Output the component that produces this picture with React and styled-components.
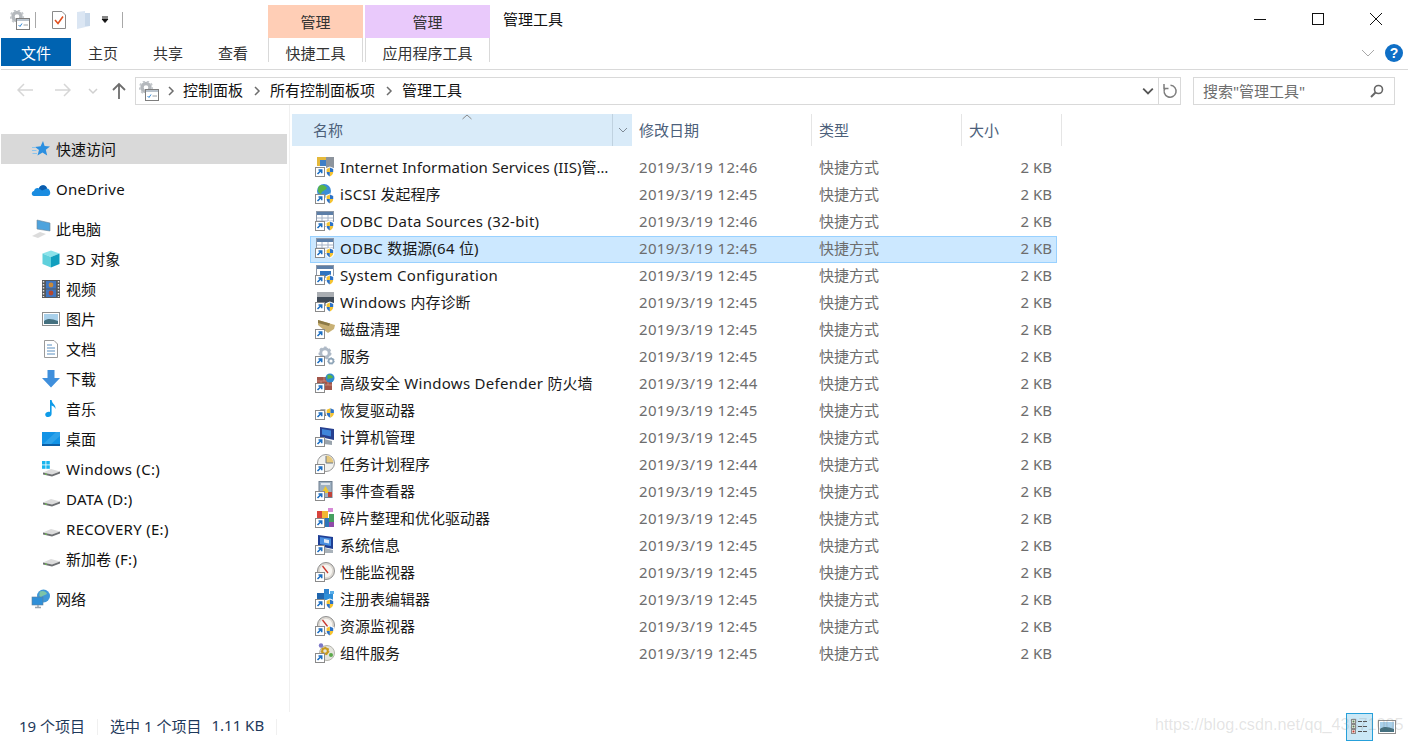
import styled, { createGlobalStyle } from 'styled-components'

const GlobalStyle = createGlobalStyle`
    html, body {
        margin: 0;
        padding: 0;
        background: #fff;
    }
    body {
        font-family: "Noto Sans", "Noto Sans CJK SC", sans-serif;
        font-size: 15px;
        color: #1a1a1a;
    }
`

const Window = styled.div`
    position: relative;
    display: flex;
    flex-direction: column;
    width: 1408px;
    height: 742px;
    overflow: hidden;
    background: #fff;
`

const TitleBar = styled.div`
    display: flex;
    align-items: flex-end;
    height: 38px;
    flex: none;
`

const Qat = styled.div`
    display: flex;
    align-items: center;
    width: 268px;
    height: 38px;
    padding: 1px 0 0 10px;
    box-sizing: border-box;
`

const QatSep = styled.span`
    width: 1px;
    height: 16px;
    background: #a8a8a8;
    margin: 0 ${(p) => p.$after}px 0 ${(p) => p.$before}px;
`

const QatGap = styled.span`
    width: 10px;
`

const ContextHead = styled.div`
    display: flex;
    align-items: center;
    justify-content: center;
    width: ${(p) => p.$w}px;
    height: 33px;
    margin-right: 2px;
    background: ${(p) => p.$bg};
    color: #333;
`

const TitleText = styled.div`
    align-self: center;
    margin: 0 0 0 11px;
    padding-bottom: 1px;
    color: #111;
`

const WindowControls = styled.div`
    display: flex;
    align-self: flex-start;
    margin-left: auto;
    margin-right: 3px;
`

const ControlButton = styled.div`
    display: flex;
    align-items: center;
    justify-content: center;
    width: 58px;
    height: 38px;
`

const TabRow = styled.div`
    display: flex;
    height: 31px;
    flex: none;
    margin-left: 1px;
    border-bottom: 1px solid #d9d9d9;
`

const FileTab = styled.div`
    display: flex;
    align-items: center;
    justify-content: center;
    width: 70px;
    height: 28px;
    background: #0063b1;
    color: #fff;
`

const Tab = styled.div`
    display: flex;
    align-items: center;
    justify-content: center;
    width: 65px;
    height: 28px;
    padding-right: 1px;
    box-sizing: border-box;
    color: #333;
`

const ContextTab = styled.div`
    display: flex;
    align-items: center;
    justify-content: center;
    width: ${(p) => p.$w}px;
    height: 24px;
    margin-left: ${(p) => p.$ml}px;
    padding-top: 4px;
    border: 1px solid #d9d9d9;
    border-width: 0 1px;
    box-sizing: border-box;
    color: #333;
`

const RibbonRight = styled.div`
    display: flex;
    align-items: center;
    margin-left: auto;
    margin-right: 5px;
    height: 30px;
    gap: 10px;
`

const AddressRow = styled.div`
    display: flex;
    align-items: flex-start;
    height: 35px;
    flex: none;
    padding-top: 7px;
    box-sizing: border-box;
`

const NavButton = styled.div`
    display: flex;
    align-items: center;
    justify-content: center;
    width: ${(p) => p.$w}px;
    height: 28px;
`

const AddressBox = styled.div`
    display: flex;
    align-items: center;
    width: 1046px;
    height: 28px;
    margin-left: 7px;
    padding-left: 3px;
    border: 1px solid #d9d9d9;
    box-sizing: border-box;
`

const CrumbSep = styled.span`
    display: flex;
    align-items: center;
    justify-content: center;
    width: ${(p) => p.$w}px;
`

const Crumb = styled.span`
    color: #111;
    line-height: 26px;
    padding-bottom: 2px;
`

const AddressEnd = styled.div`
    display: flex;
    align-items: center;
    height: 100%;
    margin-left: auto;
`

const AddressDrop = styled.div`
    display: flex;
    align-items: center;
    justify-content: center;
    width: 20px;
    height: 100%;
    border-right: 1px solid #d9d9d9;
`

const Refresh = styled.div`
    display: flex;
    align-items: center;
    justify-content: center;
    width: 21px;
`

const SearchBox = styled.div`
    display: flex;
    align-items: center;
    justify-content: space-between;
    width: 202px;
    height: 28px;
    margin-left: 12px;
    padding: 0 10px 0 9px;
    border: 1px solid #d9d9d9;
    box-sizing: border-box;
    color: #6d6d6d;
`

const SearchText = styled.span`
    padding-bottom: 2px;
    white-space: nowrap;
`

const Main = styled.div`
    display: flex;
    flex: 1;
    min-height: 0;
`

const Sidebar = styled.nav`
    width: 290px;
    flex: none;
    padding-top: 29px;
    box-sizing: border-box;
    border-right: 1px solid #f0f0f0;
`

const NavItem = styled.div`
    display: flex;
    align-items: center;
    height: 30px;
    width: 286px;
    margin-left: 1px;
    margin-bottom: ${(p) => (p.$gap ? 10 : 0)}px;
    padding-left: ${(p) => (p.$sub ? 40 : 30)}px;
    box-sizing: border-box;
    background: ${(p) => (p.$active ? '#d9d9d9' : 'transparent')};
    color: #111;
`

const NavIcon = styled.span`
    display: flex;
    align-items: center;
    justify-content: center;
    width: 20px;
    height: 20px;
    margin-right: 5px;
`

const NavLabel = styled.span`
    padding-bottom: ${(p) => (p.$latin ? 0 : 2)}px;
    white-space: nowrap;
`

const ListPane = styled.div`
    flex: 1;
    min-width: 0;
    padding-top: 9px;
`

const HeaderRow = styled.div`
    display: flex;
    height: 32px;
    margin-left: 2px;
`

const NameHeader = styled.div`
    display: flex;
    align-items: center;
    position: relative;
    width: 340px;
    background: #d9ebf9;
    color: #4c607a;
`

const NameLabel = styled.span`
    flex: 1;
    padding: 0 0 2px 21px;
`

const SortCaret = styled.span`
    position: absolute;
    left: 170px;
    top: 0;
    line-height: 0;
`

const NameDrop = styled.span`
    display: flex;
    align-items: center;
    justify-content: center;
    width: 19px;
    height: 100%;
    border-left: 1px solid #c0d2e0;
`

const HeaderCell = styled.div`
    display: flex;
    align-items: center;
    width: ${(p) => p.$w}px;
    padding: 0 0 2px ${(p) => p.$pl}px;
    box-sizing: border-box;
    border-right: 1px solid #e5e5e5;
    color: #4c607a;
`

const FileList = styled.div`
    margin: 9px 0 0 20px;
    width: 747px;
`

const FileRow = styled.div`
    display: grid;
    grid-template-columns: 25px 272px 198px 150px 1fr;
    align-items: center;
    height: 27px;
    padding: 0 4px;
    box-sizing: border-box;
    border: 1px solid ${(p) => (p.$selected ? '#99d1ff' : 'transparent')};
    background: ${(p) => (p.$selected ? '#cce8ff' : 'transparent')};
`

const FileIcon = styled.span`
    display: flex;
    width: 20px;
    height: 20px;
    margin-bottom: 3px;
`

const FileName = styled.span`
    color: #1a1a1a;
    white-space: nowrap;
    overflow: hidden;
    text-overflow: ellipsis;
    padding: 0 2px 4px 0;
`

const FileMeta = styled.span`
    color: #6d6d6d;
    white-space: nowrap;
    text-align: ${(p) => (p.$right ? 'right' : 'left')};
    padding: 0 0 4px ${(p) => p.$pl || 0}px;
    letter-spacing: ${(p) => (p.$date ? 0.34 : 0)}px;
`

const Latin = styled.span`
    letter-spacing: ${(p) => p.$track}px;
`

const StatusBar = styled.footer`
    display: flex;
    align-items: center;
    height: 30px;
    flex: none;
    padding: 0 0 0 19px;
    color: #1e395b;
`

const StatusText = styled.span`
    padding-bottom: 4px;
    margin-left: ${(p) => p.$ml || 0}px;
    white-space: nowrap;
`

const StatusSep = styled.span`
    width: 1px;
    height: 16px;
    background: #f0f0f0;
    margin: 0 ${(p) => p.$after}px 0 ${(p) => p.$before}px;
`

const ViewButtons = styled.div`
    display: flex;
    align-items: center;
    margin-left: auto;
    margin-right: 8px;
`

const ViewButton = styled.div`
    display: flex;
    align-items: center;
    justify-content: center;
    width: 27px;
    height: 28px;
    box-sizing: border-box;
    border: 1px solid ${(p) => (p.$on ? '#26a0da' : 'transparent')};
    background: ${(p) => (p.$on ? '#cbe8f6' : 'transparent')};
`

const Watermark = styled.div`
    position: absolute;
    left: 1155px;
    top: 715px;
    font-family: "Liberation Sans", sans-serif;
    font-size: 16.2px;
    color: rgba(120, 120, 120, 0.2);
    white-space: nowrap;
`

// ascii runs in Segoe sit wider than in Noto, the CJK glyphs don't
const Mixed = ({ text, track = 0.3 }) =>
    text.split(/([\x20-\x7e]+)/).map((part, i) =>
        /[\x21-\x7e]/.test(part) ? <Latin key={i} $track={track}>{part}</Latin> : part
    )

const Shortcut = () => (
    <g>
        <rect x="0.5" y="10.5" width="9" height="9" fill="#fff" stroke="#8a8a8a" />
        <path d="M2.5 17 L6 13.5 M3.5 13 H6.7 V16.2" fill="none" stroke="#1c6fc4" strokeWidth="1.6" />
    </g>
)

const Shield = ({ x = 10.5, y = 9.5, s = 1.1 }) => (
    <g transform={`translate(${x} ${y}) scale(${s})`}>
        <path d="M4 0 L8 1.5 V5 C8 7.5 6 9 4 10 C2 9 0 7.5 0 5 V1.5 Z" fill="#fff" />
        <path d="M4 1 L7 2.2 V5 H4 Z" fill="#2c72c7" />
        <path d="M4 1 L1 2.2 V5 H4 Z" fill="#f5c330" />
        <path d="M1 5 H4 V9 C2.5 8.2 1 7 1 5 Z" fill="#2c72c7" />
        <path d="M7 5 H4 V9 C5.5 8.2 7 7 7 5 Z" fill="#f5c330" />
    </g>
)

const Gear = ({ cx, cy, r, color = '#b9bec4' }) => (
    <g>
        <circle cx={cx} cy={cy} r={r} fill="none" stroke={color} strokeWidth={r * 0.7} />
        <circle cx={cx} cy={cy} r={r * 1.35} fill="none" stroke={color} strokeWidth={r * 0.4} strokeDasharray={`${r * 0.6} ${r * 0.6}`} />
    </g>
)

const Gauge = () => (
    <g>
        <circle cx="11" cy="9" r="8.5" fill="#dcd8d2" stroke="#8f8f8f" />
        <circle cx="11" cy="9" r="6.2" fill="#f7f5f1" />
        <path d="M7.5 4 L13 11" stroke="#c9372c" strokeWidth="1.3" />
    </g>
)

const TableWindow = ({ blue }) => (
    <g>
        <rect x="1.5" y="0.5" width="17" height="15" fill="#fff" stroke="#8b97a8" />
        <rect x="2" y="1" width="16" height="3" fill="#5d7fa8" />
        {blue ? (
            <rect x="5" y="6" width="11" height="7" fill="#2f74c0" />
        ) : (
            <path d="M2 7 H18 M2 10 H18 M2 13 H18 M7 4 V15 M13 4 V15" stroke="#a6b4c8" />
        )}
    </g>
)

const fileArt = {
    iis: (
        <g>
            <rect x="2" y="0" width="9" height="9" fill="#e5b93b" />
            <rect x="5" y="3" width="7" height="6" fill="#3f7fc6" />
            <rect x="11" y="0" width="8" height="13" fill="#8d949c" />
            <Shield />
        </g>
    ),
    globe: (
        <g>
            <circle cx="9" cy="7" r="7" fill="#3b8ed6" />
            <path d="M4 2 C7 0 10 1 12 4 C10 7 7 6 6 10 C3 9 2 6 4 2 Z" fill="#58b548" />
            <Shield />
        </g>
    ),
    odbc: (
        <g>
            <TableWindow />
            <Shield />
        </g>
    ),
    config: (
        <g>
            <TableWindow blue />
            <Shield />
        </g>
    ),
    memory: (
        <g>
            <rect x="2" y="0" width="17" height="5" fill="#a9adb2" />
            <rect x="2" y="5" width="17" height="9" fill="#3f4a57" />
            <Shield />
        </g>
    ),
    clean: (
        <g>
            <path d="M3 1 L20 6 L19 10 L13 14 L9 11 L3 6 Z" fill="#c8b074" />
            <path d="M3 1 L15 4.5 L14 7 L3 4 Z" fill="#8c7a46" />
        </g>
    ),
    services: (
        <g>
            <Gear cx={10} cy={7} r={4.2} color="#aeb9c6" />
            <Gear cx={16} cy={15} r={2.4} color="#8fa5b8" />
        </g>
    ),
    firewall: (
        <g>
            <rect x="2" y="4" width="15" height="13" fill="#a3564a" />
            <path d="M2 8 H17 M2 12 H17 M9 4 V8 M6 8 V12 M13 8 V12 M9 12 V17" stroke="#d19a8c" strokeWidth="0.7" />
            <circle cx="15" cy="5" r="4.5" fill="#2f8ad0" />
            <path d="M12.5 2 C15 1 18 3 18 4.5 C15 6 14 5 12.5 6.5 Z" fill="#58b548" />
        </g>
    ),
    recover: (
        <g>
            <path d="M1 13 L6 9 H13 V15 H1 Z" fill="#a7abaf" />
            <rect x="9" y="12" width="4" height="4" fill="#6b7074" />
            <Shield x={10.5} y={7} s={1.2} />
        </g>
    ),
    computer: (
        <g>
            <path d="M5 0 L19 2 V13 L5 10 Z" fill="#27408f" />
            <path d="M7 2 L16 3.5 V9.5 L7 7.5 Z" fill="#3f86da" />
            <path d="M9 12 L17 14 V18 L9 17 Z" fill="#9aa4ad" />
        </g>
    ),
    task: (
        <g>
            <circle cx="11" cy="9" r="8.5" fill="#f2f2ef" stroke="#9a9a9a" />
            <path d="M11 9 V1.5 A7.5 7.5 0 0 1 18.5 9 Z" fill="#e6c87c" />
            <path d="M11 2 V9 H18" fill="none" stroke="#6f7a88" />
        </g>
    ),
    event: (
        <g>
            <rect x="4" y="0.5" width="13" height="16" fill="#9eb0c1" stroke="#6f7f8f" />
            <rect x="6" y="2" width="9" height="2" fill="#dfe6ec" />
            <path d="M10.5 5 L14.5 12 H6.5 Z" fill="#f0c92f" />
            <rect x="13" y="11" width="4" height="5" fill="#c1443a" />
        </g>
    ),
    defrag: (
        <g>
            <rect x="2" y="3" width="5" height="7" fill="#d8433c" />
            <rect x="7" y="3" width="6" height="7" fill="#f2b632" />
            <rect x="13" y="0" width="5" height="4" fill="#d68ad6" />
            <rect x="10" y="10" width="4" height="9" fill="#2d74b8" />
            <rect x="14" y="6" width="5" height="8" fill="#46a060" />
            <rect x="14" y="14" width="5" height="5" fill="#8f4aa8" />
        </g>
    ),
    sysinfo: (
        <g>
            <path d="M3 0 L18 2 V14 L3 11 Z" fill="#1f3f95" />
            <path d="M5 2 L16 3.5 V11 L5 9 Z" fill="#4a8fe0" />
            <path d="M9 4 L14 5 V8.5 L9 7.5 Z" fill="#dfe9f6" />
            <path d="M10 13 L18 15 V18 H10 Z" fill="#a9b2ba" />
        </g>
    ),
    perf: <Gauge />,
    registry: (
        <g>
            <rect x="9" y="0" width="5" height="5" fill="#2d83cf" />
            <rect x="2" y="4" width="7" height="7" fill="#1f65ad" />
            <rect x="9" y="5" width="9" height="6" fill="#2f8fd8" />
            <rect x="15" y="2" width="4" height="3" fill="#5aaee8" />
            <Shield />
        </g>
    ),
    resource: (
        <g>
            <Gauge />
            <Shield />
        </g>
    ),
    component: (
        <g>
            <circle cx="12" cy="10" r="7.5" fill="#e4e4de" stroke="#b5b5ad" />
            <Gear cx={10} cy={8} r={2.8} color="#c79a1f" />
            <circle cx="6" cy="2.5" r="2.2" fill="#7b78c8" />
            <circle cx="16" cy="12" r="2" fill="#5aa84a" />
        </g>
    ),
}

const FileGlyph = ({ kind }) => (
    <svg width="20" height="20" viewBox="0 0 20 20">
        {fileArt[kind]}
        <Shortcut />
    </svg>
)

const AdminIcon = () => (
    <svg width="20" height="20" viewBox="0 0 20 20">
        <circle cx="7" cy="6.5" r="4" fill="none" stroke="#b4b8bc" strokeWidth="3.4" />
        <circle cx="7" cy="6.5" r="6.2" fill="none" stroke="#c4c8cc" strokeWidth="1.8" strokeDasharray="2.2 2" />
        <rect x="6.5" y="8.5" width="13" height="11" fill="#fff" stroke="#7d7d7d" />
        <rect x="7" y="9" width="12" height="2" fill="#b9c3cd" />
        <path d="M8.5 15 L10 16.5 L12 13.5" fill="none" stroke="#2f86d6" />
        <path d="M13.5 15 H18" stroke="#9aa0a6" />
    </svg>
)

const TaskDoc = () => (
    <svg width="16" height="18" viewBox="0 0 16 18">
        <path d="M1.5 0.5 H11 L14.5 4 V17.5 H1.5 Z" fill="#fff" stroke="#8a8a8a" />
        <path d="M4 9 L7 12.5 L12 5.5" fill="none" stroke="#e2501f" strokeWidth="1.6" />
    </svg>
)

const PaleFolder = () => (
    <svg width="14" height="18" viewBox="0 0 14 18">
        <path d="M0 1 L8 0 V2 H13 V15 L0 18 Z" fill="#dbe6f3" />
        <path d="M8 2 V15 H13 V2 Z" fill="#c8d8ea" />
    </svg>
)

const Chevron = ({ dir = 'right', color = '#6d6d6d', size = 10, w = 1.5 }) => {
    const d = {
        right: 'M3 1 L7 5 L3 9',
        down: 'M1 3 L5 7 L9 3',
        up: 'M1 7 L5 3 L9 7',
    }[dir]
    return (
        <svg width={size} height={size} viewBox="0 0 10 10">
            <path d={d} fill="none" stroke={color} strokeWidth={w} />
        </svg>
    )
}

const NavArrow = ({ dir, color, w = 1.5 }) => {
    const d = {
        left: 'M16 8 H1 M7 2 L1 8 L7 14',
        right: 'M0 8 H15 M9 2 L15 8 L9 14',
        up: 'M8 17 V2 M2 8 L8 2 L14 8',
    }[dir]
    return (
        <svg width="16" height="18" viewBox="0 0 16 18">
            <path d={d} fill="none" stroke={color} strokeWidth={w} />
        </svg>
    )
}

const QuickIcon = () => (
    <svg width="18" height="18" viewBox="0 0 18 18">
        <path d="M11 1 L12.6 6 L18 6.4 L13.8 9.8 L15.2 15.5 L10.5 12.4 L5.5 15.5 L7 10 L3 7 L8.6 6.2 Z" fill="#2b8fe0" />
        <path d="M0 7.5 H4 M0 10.5 H4.5 M0.5 13.5 H5" stroke="#8cc4ec" />
    </svg>
)

const CloudIcon = () => (
    <svg width="21" height="15" viewBox="0 0 20 14">
        <path d="M3 13.5 C0 13.5 0 9 3 8.5 C3.5 6 6 5 8 6 C9 2 15 1.5 16 6 C19 6 21 12 17 13.5 Z" fill="#1a8ce0" />
        <path d="M8 6 C9 2 15 1.5 16 6 L11 8 Z" fill="#0b5cad" />
    </svg>
)

const PcIcon = () => (
    <svg width="20" height="20" viewBox="0 0 20 20">
        <path d="M6 1 L19 4 V12 L6 10 Z" fill="#4ea3dd" stroke="#6f8799" strokeWidth="0.6" />
        <path d="M1 17 L9 13 L15 15 L7 19 Z" fill="#dcdcdc" />
    </svg>
)

const CubeIcon = () => (
    <svg width="18" height="18" viewBox="0 0 18 18">
        <path d="M9 0.5 L17.5 3.5 L9 7 L0.5 3.5 Z" fill="#8be3ea" />
        <path d="M0.5 3.5 L9 7 V17.5 L0.5 14 Z" fill="#5fd0dc" />
        <path d="M17.5 3.5 L9 7 V17.5 L17.5 14 Z" fill="#119fbe" />
    </svg>
)

const FilmIcon = () => (
    <svg width="18" height="18" viewBox="0 0 18 18">
        <rect width="18" height="18" fill="#55585c" />
        <path d="M1.5 1 V17 M16.5 1 V17" stroke="#e4e4e4" strokeWidth="1.4" strokeDasharray="1.5 1.5" />
        <rect x="4" y="1" width="10" height="7.5" fill="#3f76c2" />
        <rect x="4" y="9.5" width="10" height="7.5" fill="#3f76c2" />
        <circle cx="9" cy="5" r="2.4" fill="#c98a3a" />
        <circle cx="9" cy="13" r="2.4" fill="#b5472f" />
    </svg>
)

const PictureIcon = () => (
    <svg width="18" height="14" viewBox="0 0 18 14">
        <rect x="0.5" y="0.5" width="17" height="13" fill="#fff" stroke="#8f8f8f" />
        <rect x="2" y="2" width="14" height="10" fill="#a9d0ea" />
        <path d="M2 9 C6 6 10 7 16 9 V12 H2 Z" fill="#44707f" />
    </svg>
)

const DocIcon = () => (
    <svg width="16" height="18" viewBox="0 0 16 18">
        <path d="M1.5 0.5 H11 L14.5 4 V17.5 H1.5 Z" fill="#fff" stroke="#9a9a9a" />
        <path d="M4 5 H9 M4 8 H12 M4 11 H12 M4 14 H12" stroke="#5a8fc0" />
    </svg>
)

const DownIcon = () => (
    <svg width="18" height="18" viewBox="0 0 18 18">
        <path d="M5.5 0 H12.5 V8 H18 L9 17.5 L0 8 H5.5 Z" fill="#3f8fdc" />
    </svg>
)

const NoteIcon = () => (
    <svg width="14" height="18" viewBox="0 0 14 18">
        <path d="M6 0 H7.6 C8 4 12 4.5 11.5 9 C10.5 6.5 9 6 7.6 5.5 V14 C7.6 18 1 18 1.2 14.5 C1.4 12 4.5 11.2 6 12 Z" fill="#0f9be8" />
    </svg>
)

const DesktopIcon = () => (
    <svg width="18" height="14" viewBox="0 0 18 14">
        <rect width="18" height="13" fill="#1293e6" />
        <path d="M0 13 L14 0 H18 V4 L8 13 Z" fill="#2ea2ea" />
        <rect y="12" width="18" height="2" fill="#0b5fa8" />
    </svg>
)

const DriveIcon = ({ win }) => (
    <svg width="20" height="18" viewBox="0 0 20 18">
        {win && (
            <g fill="#19b5ee">
                <rect x="1" y="1" width="3.5" height="3.5" />
                <rect x="5.3" y="1" width="3.5" height="3.5" />
                <rect x="1" y="5.3" width="3.5" height="3.5" />
                <rect x="5.3" y="5.3" width="3.5" height="3.5" />
            </g>
        )}
        <path d="M2 12.5 L10 9 L19 11.5 L11 14.5 Z" fill="#dcdcdc" />
        <path d="M2 12.5 L11 14.5 L19 11.5 V13.5 L11 16.5 L2 14.5 Z" fill="#6d6f72" />
        <rect x="4" y="13.6" width="2" height="1" fill="#6fd14b" />
    </svg>
)

const NetIcon = () => (
    <svg width="20" height="20" viewBox="0 0 20 20">
        <circle cx="12.5" cy="7" r="6.5" fill="#3f97d8" />
        <path d="M9 2.5 C12 1 16 3 16 5 C13 7 11 6 10 9 C8 8 8 5 9 2.5 Z" fill="#7cc4a8" />
        <rect x="1" y="8" width="11" height="8" fill="#2f8fd8" stroke="#5f7f99" strokeWidth="0.6" />
        <path d="M4 18.5 H10 M7 16 V18.5" stroke="#9aa4ad" strokeWidth="1.4" />
    </svg>
)

const ListViewIcon = () => (
    <svg width="17" height="16" viewBox="0 0 17 16">
        {[1, 6, 11].map((y, i) => (
            <g key={y}>
                <rect x="0.5" y={y - 0.5} width="4" height="4" fill="#fff" stroke="#8a8a8a" />
                <rect x="1.5" y={y + 0.5} width="2" height="2" fill={i === 2 ? '#c0392b' : '#5e7f52'} />
                <path d={`M7 ${y + 1.5} H16`} stroke="#555" strokeDasharray="4 1" />
            </g>
        ))}
    </svg>
)

const files = [
    { kind: 'iis', name: 'Internet Information Services (IIS)管理器', date: '2019/3/19 12:46', track: 0.08 },
    { kind: 'globe', name: 'iSCSI 发起程序', date: '2019/3/19 12:45' },
    { kind: 'odbc', name: 'ODBC Data Sources (32-bit)', date: '2019/3/19 12:46' },
    { kind: 'odbc', name: 'ODBC 数据源(64 位)', date: '2019/3/19 12:45', selected: true },
    { kind: 'config', name: 'System Configuration', date: '2019/3/19 12:45' },
    { kind: 'memory', name: 'Windows 内存诊断', date: '2019/3/19 12:45' },
    { kind: 'clean', name: '磁盘清理', date: '2019/3/19 12:45' },
    { kind: 'services', name: '服务', date: '2019/3/19 12:45' },
    { kind: 'firewall', name: '高级安全 Windows Defender 防火墙', date: '2019/3/19 12:44' },
    { kind: 'recover', name: '恢复驱动器', date: '2019/3/19 12:45' },
    { kind: 'computer', name: '计算机管理', date: '2019/3/19 12:45' },
    { kind: 'task', name: '任务计划程序', date: '2019/3/19 12:44' },
    { kind: 'event', name: '事件查看器', date: '2019/3/19 12:45' },
    { kind: 'defrag', name: '碎片整理和优化驱动器', date: '2019/3/19 12:45' },
    { kind: 'sysinfo', name: '系统信息', date: '2019/3/19 12:45' },
    { kind: 'perf', name: '性能监视器', date: '2019/3/19 12:45' },
    { kind: 'registry', name: '注册表编辑器', date: '2019/3/19 12:45' },
    { kind: 'resource', name: '资源监视器', date: '2019/3/19 12:45' },
    { kind: 'component', name: '组件服务', date: '2019/3/19 12:45' },
]

const places = [
    { label: '快速访问', icon: <QuickIcon />, active: true, gap: true },
    { label: 'OneDrive', icon: <CloudIcon />, gap: true, latin: true },
    { label: '此电脑', icon: <PcIcon /> },
    { label: '3D 对象', icon: <CubeIcon />, sub: true },
    { label: '视频', icon: <FilmIcon />, sub: true },
    { label: '图片', icon: <PictureIcon />, sub: true },
    { label: '文档', icon: <DocIcon />, sub: true },
    { label: '下载', icon: <DownIcon />, sub: true },
    { label: '音乐', icon: <NoteIcon />, sub: true },
    { label: '桌面', icon: <DesktopIcon />, sub: true },
    { label: 'Windows (C:)', icon: <DriveIcon win />, sub: true, latin: true },
    { label: 'DATA (D:)', icon: <DriveIcon />, sub: true, latin: true },
    { label: 'RECOVERY (E:)', icon: <DriveIcon />, sub: true, latin: true },
    { label: '新加卷 (F:)', icon: <DriveIcon />, sub: true, gap: true },
    { label: '网络', icon: <NetIcon /> },
]

const App = () => {
    return (
        <Window>
            <GlobalStyle />
            <TitleBar>
                <Qat>
                    <AdminIcon />
                    <QatSep $before={5} $after={15} />
                    <TaskDoc />
                    <QatGap />
                    <PaleFolder />
                    <svg width="28" height="8" viewBox="0 0 28 8">
                        <path d="M11 1 H17 M11 3 H17 L14 6.5 Z" stroke="#111" fill="#111" strokeWidth="1" />
                    </svg>
                    <QatSep $before={3} $after={0} />
                </Qat>
                <ContextHead $w={95} $bg="#ffceb6">管理</ContextHead>
                <ContextHead $w={125} $bg="#e9c9fb">管理</ContextHead>
                <TitleText>管理工具</TitleText>
                <WindowControls>
                    <ControlButton>
                        <svg width="12" height="12" viewBox="0 0 12 12">
                            <path d="M0 6.5 H12" stroke="#111" />
                        </svg>
                    </ControlButton>
                    <ControlButton>
                        <svg width="12" height="12" viewBox="0 0 12 12">
                            <rect x="0.5" y="0.5" width="11" height="11" fill="none" stroke="#111" />
                        </svg>
                    </ControlButton>
                    <ControlButton>
                        <svg width="12" height="12" viewBox="0 0 12 12">
                            <path d="M0 0 L12 12 M12 0 L0 12" stroke="#111" />
                        </svg>
                    </ControlButton>
                </WindowControls>
            </TitleBar>

            <TabRow>
                <FileTab>文件</FileTab>
                <Tab>主页</Tab>
                <Tab>共享</Tab>
                <Tab>查看</Tab>
                <ContextTab $w={95} $ml={2}>快捷工具</ContextTab>
                <ContextTab $w={125} $ml={2}>应用程序工具</ContextTab>
                <RibbonRight>
                    <svg width="14" height="8" viewBox="0 0 14 8">
                        <path d="M1 1 L7 7 L13 1" fill="none" stroke="#a8a8a8" />
                    </svg>
                    <svg width="18" height="18" viewBox="0 0 18 18">
                        <circle cx="9" cy="9" r="9" fill="#0f6fc6" />
                        <text x="9" y="14" textAnchor="middle" fontSize="14" fontWeight="700" fill="#fff" fontFamily="Liberation Sans">?</text>
                    </svg>
                </RibbonRight>
            </TabRow>

            <AddressRow>
                <NavButton $w={50}><NavArrow dir="left" color="#d6d6d6" /></NavButton>
                <NavButton $w={26}><NavArrow dir="right" color="#d6d6d6" /></NavButton>
                <NavButton $w={34}><Chevron dir="down" color="#d0d0d0" /></NavButton>
                <NavButton $w={18}><NavArrow dir="up" color="#6d6d6d" w={1.8} /></NavButton>
                <AddressBox>
                    <AdminIcon />
                    <CrumbSep $w={24}><Chevron /></CrumbSep>
                    <Crumb>控制面板</Crumb>
                    <CrumbSep $w={27}><Chevron /></CrumbSep>
                    <Crumb>所有控制面板项</Crumb>
                    <CrumbSep $w={27}><Chevron /></CrumbSep>
                    <Crumb>管理工具</Crumb>
                    <AddressEnd>
                        <AddressDrop><Chevron dir="down" color="#555" size={12} /></AddressDrop>
                        <Refresh>
                            <svg width="16" height="16" viewBox="0 0 16 16">
                                <path d="M8.5 2.2 A6 6 0 1 1 3 5" fill="none" stroke="#7d7d7d" strokeWidth="1.5" />
                                <path d="M2 1 V5.5 H6.5" fill="none" stroke="#7d7d7d" strokeWidth="1.5" />
                            </svg>
                        </Refresh>
                    </AddressEnd>
                </AddressBox>
                <SearchBox>
                    <SearchText>搜索"管理工具"</SearchText>
                    <svg width="14" height="14" viewBox="0 0 14 14">
                        <circle cx="8.5" cy="5.5" r="4" fill="none" stroke="#666" strokeWidth="1.6" />
                        <path d="M5.5 8.5 L1 13" stroke="#666" strokeWidth="2" />
                    </svg>
                </SearchBox>
            </AddressRow>

            <Main>
                <Sidebar>
                    {places.map((p) => (
                        <NavItem key={p.label} $active={p.active} $sub={p.sub} $gap={p.gap}>
                            <NavIcon>{p.icon}</NavIcon>
                            <NavLabel $latin={p.latin}><Mixed text={p.label} /></NavLabel>
                        </NavItem>
                    ))}
                </Sidebar>
                <ListPane>
                    <HeaderRow>
                        <NameHeader>
                            <SortCaret>
                                <svg width="10" height="6" viewBox="0 0 10 6">
                                    <path d="M0.5 5 L5 1 L9.5 5" fill="none" stroke="#8a8a8a" />
                                </svg>
                            </SortCaret>
                            <NameLabel>名称</NameLabel>
                            <NameDrop><Chevron dir="down" color="#7f8a96" size={10} w={1} /></NameDrop>
                        </NameHeader>
                        <HeaderCell $w={180} $pl={7}>修改日期</HeaderCell>
                        <HeaderCell $w={150} $pl={7}>类型</HeaderCell>
                        <HeaderCell $w={100} $pl={7}>大小</HeaderCell>
                    </HeaderRow>
                    <FileList>
                        {files.map((f) => (
                            <FileRow key={f.name} $selected={f.selected}>
                                <FileIcon><FileGlyph kind={f.kind} /></FileIcon>
                                <FileName><Mixed text={f.name} track={f.track} /></FileName>
                                <FileMeta $pl={27} $date>{f.date}</FileMeta>
                                <FileMeta $pl={9}>快捷方式</FileMeta>
                                <FileMeta $right>2 KB</FileMeta>
                            </FileRow>
                        ))}
                    </FileList>
                </ListPane>
            </Main>

            <StatusBar>
                <StatusText>19 个项目</StatusText>
                <StatusSep $before={12} $after={12} />
                <StatusText>选中 1 个项目</StatusText>
                <StatusText $ml={10}>1.11 KB</StatusText>
                <StatusSep $before={12} $after={0} />
                <ViewButtons>
                    <ViewButton $on><ListViewIcon /></ViewButton>
                    <ViewButton><PictureIcon /></ViewButton>
                </ViewButtons>
            </StatusBar>
            <Watermark>https://blog.csdn.net/qq_43371005</Watermark>
        </Window>
    )
}

export default App
